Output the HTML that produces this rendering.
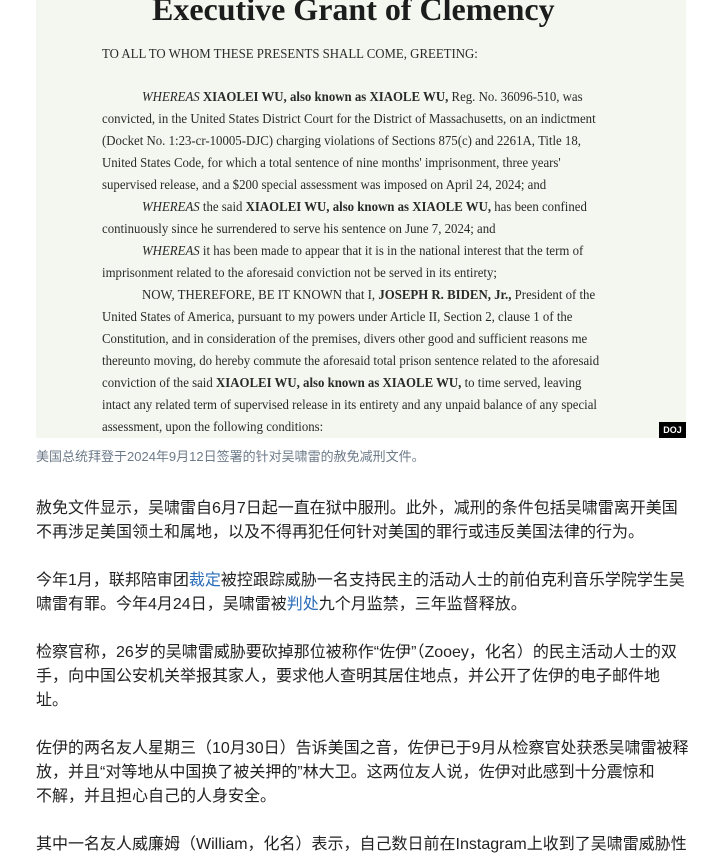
<!DOCTYPE html>
<html><head><meta charset="utf-8">
<style>
html,body{margin:0;padding:0;background:#fff;width:704px;height:858px;overflow:hidden}
.img{position:absolute;left:36px;top:0;width:650px;height:438px;background:#f4f7ef;overflow:hidden}
.doc{position:absolute;font-family:"Liberation Serif",serif;color:#2a2a2a;font-size:13.5px;white-space:nowrap;transform:scaleX(0.95);transform-origin:left top;line-height:16px}
.title{position:absolute;left:116px;top:-9px;font-family:"Liberation Serif",serif;font-weight:bold;font-size:32px;color:#1c1c1c;white-space:nowrap}
.doj{position:absolute;left:659px;top:422px;width:27px;height:16px;background:#000;color:#fff;font:bold 9px "Liberation Sans",sans-serif;line-height:16px;text-align:center}
.cap{position:absolute;left:36px;top:446px;font-family:"WenQuanYi Zen Hei",sans-serif;font-size:13px;color:#6c7a88}
.p{position:absolute;left:36px;width:680px;white-space:nowrap;font-family:"WenQuanYi Zen Hei",sans-serif;font-size:16px;line-height:24px;color:#222}
a{color:#2a6cb8;text-decoration:none}
</style></head><body>
<div class="img">
<div class="title">Executive Grant of Clemency</div>
<div class="doc" style="left:66px;top:46px">TO ALL TO WHOM THESE PRESENTS SHALL COME, GREETING:</div>
<div class="doc" style="left:106px;top:89px"><i>WHEREAS</i> <b>XIAOLEI WU, also known as XIAOLE WU,</b> Reg. No. 36096-510, was</div>
<div class="doc" style="left:66px;top:111px">convicted, in the United States District Court for the District of Massachusetts, on an indictment</div>
<div class="doc" style="left:66px;top:133px">(Docket No. 1:23-cr-10005-DJC) charging violations of Sections 875(c) and 2261A, Title 18,</div>
<div class="doc" style="left:66px;top:155px">United States Code, for which a total sentence of nine months' imprisonment, three years'</div>
<div class="doc" style="left:66px;top:177px">supervised release, and a $200 special assessment was imposed on April 24, 2024; and</div>
<div class="doc" style="left:106px;top:199px"><i>WHEREAS</i> the said <b>XIAOLEI WU, also known as XIAOLE WU,</b> has been confined</div>
<div class="doc" style="left:66px;top:221px">continuously since he surrendered to serve his sentence on June 7, 2024; and</div>
<div class="doc" style="left:106px;top:243px"><i>WHEREAS</i> it has been made to appear that it is in the national interest that the term of</div>
<div class="doc" style="left:66px;top:265px">imprisonment related to the aforesaid conviction not be served in its entirety;</div>
<div class="doc" style="left:106px;top:287px">NOW, THEREFORE, BE IT KNOWN that I, <b>JOSEPH R. BIDEN, Jr.,</b> President of the</div>
<div class="doc" style="left:66px;top:309px">United States of America, pursuant to my powers under Article II, Section 2, clause 1 of the</div>
<div class="doc" style="left:66px;top:331px">Constitution, and in consideration of the premises, divers other good and sufficient reasons me</div>
<div class="doc" style="left:66px;top:353px">thereunto moving, do hereby commute the aforesaid total prison sentence related to the aforesaid</div>
<div class="doc" style="left:66px;top:375px">conviction of the said <b>XIAOLEI WU, also known as XIAOLE WU,</b> to time served, leaving</div>
<div class="doc" style="left:66px;top:397px">intact any related term of supervised release in its entirety and any unpaid balance of any special</div>
<div class="doc" style="left:66px;top:419px">assessment, upon the following conditions:</div>
</div>
<div class="doj">DOJ</div>
<div class="cap">美国总统拜登于2024年9月12日签署的针对吴啸雷的赦免减刑文件。</div>
<div class="p" style="top:497px">赦免文件显示，吴啸雷自6月7日起一直在狱中服刑。此外，减刑的条件包括吴啸雷离开美国<br>不再涉足美国领土和属地，以及不得再犯任何针对美国的罪行或违反美国法律的行为。</div>
<div class="p" style="top:569px">今年1月，联邦陪审团<a>裁定</a>被控跟踪威胁一名支持民主的活动人士的前伯克利音乐学院学生吴<br>啸雷有罪。今年4月24日，吴啸雷被<a>判处</a>九个月监禁，三年监督释放。</div>
<div class="p" style="top:641px">检察官称，26岁的吴啸雷威胁要砍掉那位被称作“佐伊”（Zooey，化名）的民主活动人士的双<br>手，向中国公安机关举报其家人，要求他人查明其居住地点，并公开了佐伊的电子邮件地<br>址。</div>
<div class="p" style="top:737px">佐伊的两名友人星期三（10月30日）告诉美国之音，佐伊已于9月从检察官处获悉吴啸雷被释<br>放，并且“对等地从中国换了被关押的”林大卫。这两位友人说，佐伊对此感到十分震惊和<br>不解，并且担心自己的人身安全。</div>
<div class="p" style="top:833px">其中一名友人威廉姆（William，化名）表示，自己数日前在Instagram上收到了吴啸雷威胁性</div>
</body></html>
